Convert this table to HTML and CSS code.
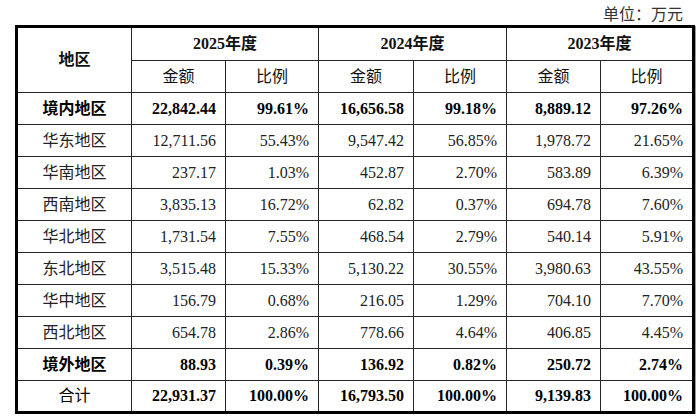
FILE: index.html
```html
<!DOCTYPE html>
<html lang="zh-CN">
<head>
<meta charset="utf-8">
<title>地区收入</title>
<link rel="stylesheet" href="styles.css">
</head>
<body>
<div class="unit">单位：万元</div>
<table class="grid">
  <colgroup>
    <col class="c-region">
    <col class="c-a">
    <col class="c-b">
    <col class="c-c">
    <col class="c-b">
    <col class="c-a">
    <col class="c-b">
  </colgroup>
  <thead>
    <tr class="h1">
      <th rowspan="2" class="bold">地区</th>
      <th colspan="2" class="bold">2025年度</th>
      <th colspan="2" class="bold">2024年度</th>
      <th colspan="2" class="bold">2023年度</th>
    </tr>
    <tr class="h2">
      <th>金额</th><th>比例</th>
      <th>金额</th><th>比例</th>
      <th>金额</th><th>比例</th>
    </tr>
  </thead>
  <tbody>
    <tr class="strong"><td class="rg">境内地区</td><td>22,842.44</td><td>99.61%</td><td>16,656.58</td><td>99.18%</td><td>8,889.12</td><td>97.26%</td></tr>
    <tr><td class="rg">华东地区</td><td>12,711.56</td><td>55.43%</td><td>9,547.42</td><td>56.85%</td><td>1,978.72</td><td>21.65%</td></tr>
    <tr><td class="rg">华南地区</td><td>237.17</td><td>1.03%</td><td>452.87</td><td>2.70%</td><td>583.89</td><td>6.39%</td></tr>
    <tr><td class="rg">西南地区</td><td>3,835.13</td><td>16.72%</td><td>62.82</td><td>0.37%</td><td>694.78</td><td>7.60%</td></tr>
    <tr><td class="rg">华北地区</td><td>1,731.54</td><td>7.55%</td><td>468.54</td><td>2.79%</td><td>540.14</td><td>5.91%</td></tr>
    <tr><td class="rg">东北地区</td><td>3,515.48</td><td>15.33%</td><td>5,130.22</td><td>30.55%</td><td>3,980.63</td><td>43.55%</td></tr>
    <tr><td class="rg">华中地区</td><td>156.79</td><td>0.68%</td><td>216.05</td><td>1.29%</td><td>704.10</td><td>7.70%</td></tr>
    <tr><td class="rg">西北地区</td><td>654.78</td><td>2.86%</td><td>778.66</td><td>4.64%</td><td>406.85</td><td>4.45%</td></tr>
    <tr class="strong"><td class="rg">境外地区</td><td>88.93</td><td>0.39%</td><td>136.92</td><td>0.82%</td><td>250.72</td><td>2.74%</td></tr>
    <tr class="total"><td class="rg">合计</td><td>22,931.37</td><td>100.00%</td><td>16,793.50</td><td>100.00%</td><td>9,139.83</td><td>100.00%</td></tr>
  </tbody>
</table>
</body>
</html>
```
FILE: styles.css
```css
html, body {
  margin: 0;
  padding: 0;
  background: #ffffff;
}
body {
  font-family: "Liberation Serif", "Noto Sans CJK SC", serif;
  font-size: 16px;
  color: #111111;
}
.unit {
  height: 25px;
  box-sizing: border-box;
  padding-top: 5px;
  padding-right: 17px;
  line-height: 20px;
  text-align: right;
  color: #333333;
}
.grid {
  margin-left: 15px;
  border-collapse: collapse;
  table-layout: fixed;
  width: 678px;
  border: 3px solid #000000;
  box-shadow: 1px 1px 0 #9a9a9a;
}
.c-region { width: 115px; }
.c-a { width: 94px; }
.c-b { width: 93px; }
.c-c { width: 95px; }
.grid th,
.grid td {
  border: 1px solid #262626;
  padding: 0 9px 0 0;
  line-height: 20px;
  white-space: nowrap;
}
.grid th {
  font-weight: normal;
  text-align: center;
  padding: 0;
}
.grid th.bold {
  font-weight: bold;
}
.h1 { height: 34px; }
.h2 { height: 32px; }
.grid tbody tr { height: 32px; }
.grid td {
  text-align: right;
  color: #222222;
}
.grid td.rg {
  text-align: center;
  padding: 0;
}
.strong td {
  font-weight: bold;
  color: #000000;
}
.total td {
  font-weight: bold;
  color: #000000;
}
.total td.rg {
  font-weight: normal;
}
```
